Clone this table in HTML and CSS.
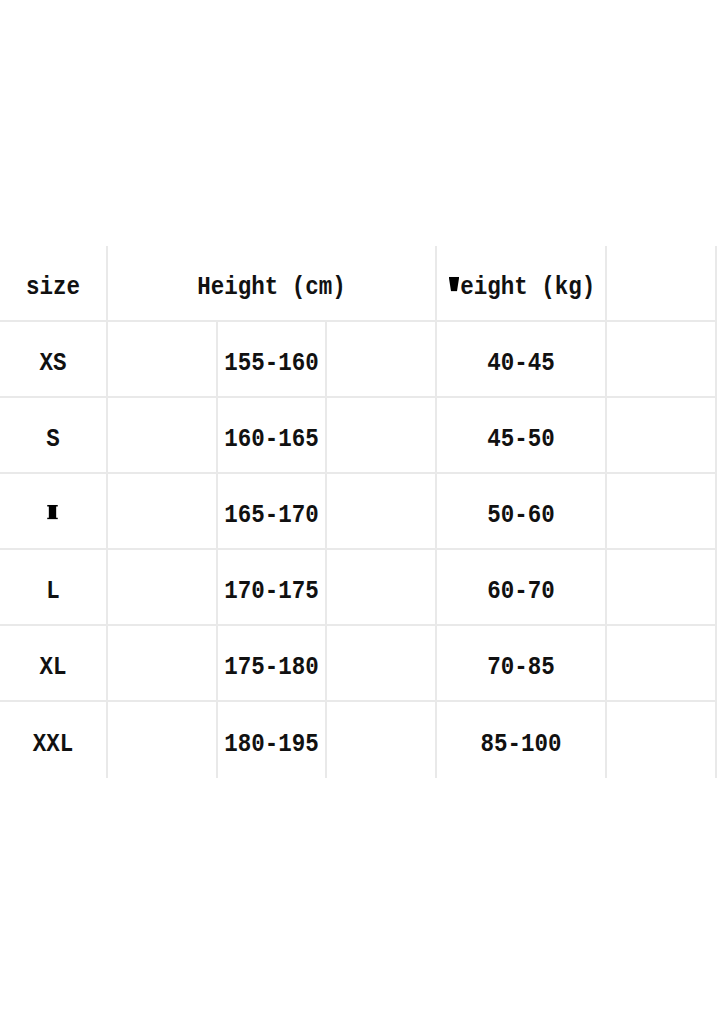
FILE: index.html
```html
<!DOCTYPE html>
<html>
<head>
<meta charset="utf-8">
<link rel="stylesheet" href="styles.css">
</head>
<body>
<div class="page">
  <table class="size-table">
    <colgroup>
      <col class="c0"><col class="c1"><col class="c2"><col class="c3"><col class="c4"><col class="c5">
    </colgroup>
    <tr class="head">
      <td><span class="txt">size</span></td>
      <td colspan="3"><span class="txt">Height (cm)</span></td>
      <td><span class="txt"><span class="blot blot-w">W</span>eight (kg)</span></td>
      <td></td>
    </tr>
    <tr><td><span class="txt">XS</span></td><td></td><td><span class="txt">155-160</span></td><td></td><td><span class="txt">40-45</span></td><td></td></tr>
    <tr><td><span class="txt">S</span></td><td></td><td><span class="txt">160-165</span></td><td></td><td><span class="txt">45-50</span></td><td></td></tr>
    <tr><td><span class="txt"><span class="blot blot-m">M</span></span></td><td></td><td><span class="txt">165-170</span></td><td></td><td><span class="txt">50-60</span></td><td></td></tr>
    <tr><td><span class="txt">L</span></td><td></td><td><span class="txt">170-175</span></td><td></td><td><span class="txt">60-70</span></td><td></td></tr>
    <tr><td><span class="txt">XL</span></td><td></td><td><span class="txt">175-180</span></td><td></td><td><span class="txt">70-85</span></td><td></td></tr>
    <tr class="last"><td><span class="txt">XXL</span></td><td></td><td><span class="txt">180-195</span></td><td></td><td><span class="txt">85-100</span></td><td></td></tr>
  </table>
</div>
</body>
</html>
```

FILE: styles.css
```css
html, body {
  margin: 0;
  padding: 0;
  background: #ffffff;
}

.page {
  padding-top: 246px;
  width: 717px;
}

.size-table {
  border-collapse: separate;
  border-spacing: 0;
  table-layout: fixed;
  width: 717px;
  font-family: "Liberation Mono", "Courier New", monospace;
  font-weight: bold;
  font-size: 22.5px;
  color: #111;
}

.c0 { width: 108px; }
.c1 { width: 110px; }
.c2 { width: 109px; }
.c3 { width: 110px; }
.c4 { width: 170px; }
.c5 { width: 110px; }

.size-table td {
  box-sizing: border-box;
  height: 76px;
  padding: 7px 0 0 0;
  text-align: center;
  vertical-align: middle;
  border-right: 2px solid #e9e9e9;
  border-bottom: 2px solid #e9e9e9;
  white-space: nowrap;
}

.size-table tr.last td {
  border-bottom: none;
}

.txt {
  display: inline-block;
  transform: scaleY(1.14);
}

.blot {
  display: inline-block;
  position: relative;
  width: 1ch;
  color: transparent;
}

.blot::after {
  content: "";
  position: absolute;
  background: #000;
}

.blot-w::after {
  left: 2px;
  right: 1px;
  top: 4px;
  height: 13px;
  clip-path: polygon(0 0, 100% 0, 78% 100%, 22% 100%);
}

.blot-m::after {
  left: 1px;
  right: 2px;
  top: 4px;
  height: 13px;
  clip-path: polygon(0 0, 100% 0, 100% 12%, 85% 12%, 85% 88%, 100% 88%, 100% 100%, 0 100%, 0 88%, 15% 88%, 15% 12%, 0 12%);
}
```
